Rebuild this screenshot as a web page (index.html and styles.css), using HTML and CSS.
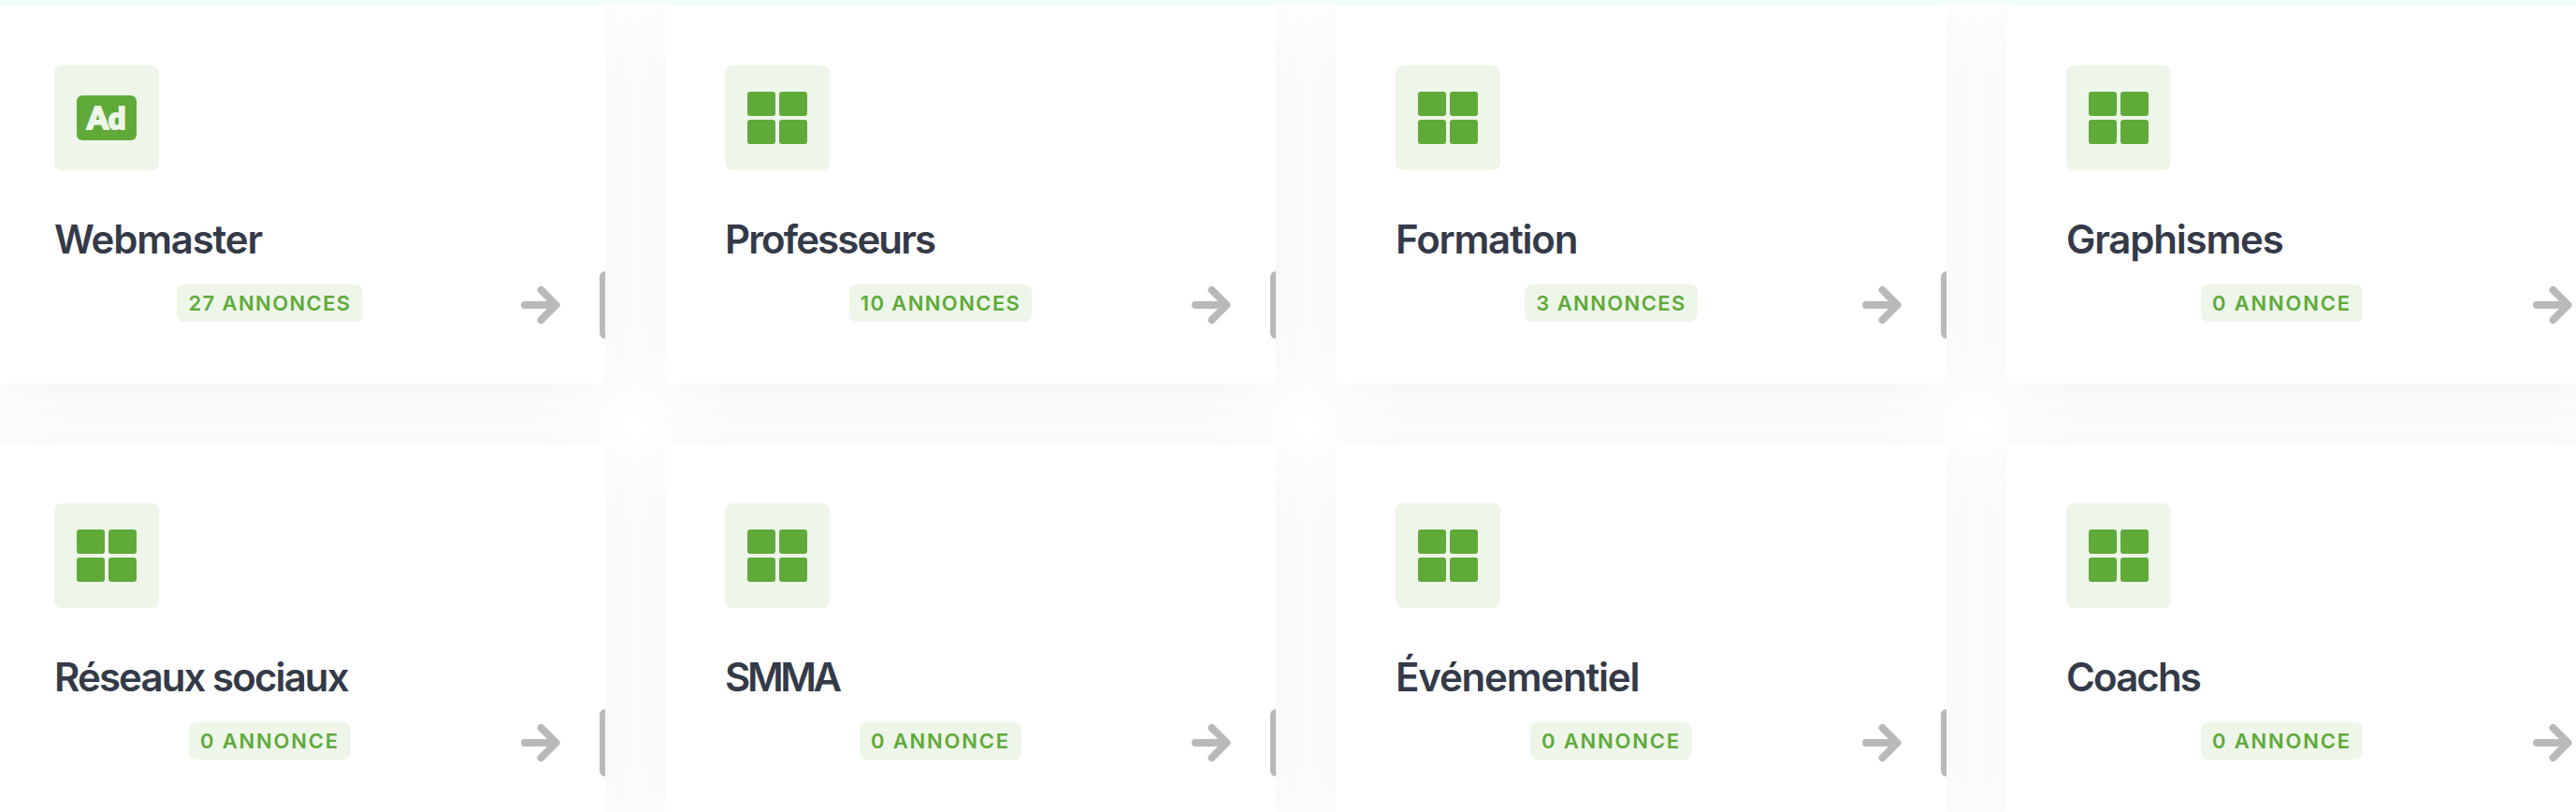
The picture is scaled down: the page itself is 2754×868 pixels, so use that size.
FILE: index.html
```
<!DOCTYPE html>
<html lang="fr">
<head>
<meta charset="utf-8">
<title>Annonces</title>
<link rel="stylesheet" href="styles.css">
<script src="cards.js" defer></script>
</head>
<body>
<svg class="sprite" width="0" height="0">
  <symbol id="arrow" viewBox="0 0 42 40">
    <path d="M4 20H36M21.5 4L37.5 20L21.5 36" fill="none" stroke="currentColor" stroke-width="8" stroke-linecap="round" stroke-linejoin="round"/>
  </symbol>
  <symbol id="grid" viewBox="0 0 64 56">
    <rect width="30" height="26" rx="3"/>
    <rect x="34" width="30" height="26" rx="3"/>
    <rect y="30" width="30" height="26" rx="3"/>
    <rect x="34" y="30" width="30" height="26" rx="3"/>
  </symbol>
</svg>
<div class="topbar"></div>
<div class="categories" id="categories"></div>
</body>
</html>
```
FILE: styles.css
```
* {
  box-sizing: border-box;
}
body {
  margin: 0;
  height: 868px;
  overflow: hidden;
  background: #fff;
  color: #343a48;
  font-family: Inter, "Liberation Sans", sans-serif;
}
.sprite {
  display: block;
}
.topbar {
  position: relative;
  z-index: 2;
  height: 6px;
  background: #f2fdf5;
}
.categories {
  display: grid;
  grid-template-columns: repeat(4, 653px);
  gap: 64px;
  margin-left: -6px;
}
/* the shadow sits on the outer box so it stays under the other cards */
.category {
  border-radius: 8px;
  box-shadow: 0 12px 70px rgba(20, 50, 100, .062);
}
.card {
  position: relative;
  z-index: 1;
  height: 404px;
  padding: 64px;
  overflow: hidden;
  background: #fff;
  border-radius: 8px;
}
.card-icon {
  display: flex;
  align-items: center;
  justify-content: center;
  width: 112px;
  height: 112px;
  border-radius: 8px;
  background: #eef6ea;
  color: #60aa3a;
}
.card-icon svg {
  width: 64px;
  height: 56px;
  fill: currentColor;
}
.ad {
  width: 64px;
  height: 48px;
  border-radius: 6px;
  background: #60aa3a;
  color: #eef6ea;
  font-family: Lato, Inter, sans-serif;
  font-size: 32px;
  font-weight: 900;
  line-height: 48px;
  text-align: center;
  letter-spacing: .5px;
  -webkit-text-stroke: 2.2px #eef6ea;
}
.card-title {
  margin: 46px 0 0;
  font-size: 42px;
  font-weight: 600;
  line-height: 56px;
  letter-spacing: -1.2px;
  white-space: nowrap;
}
.card-title.tight {
  letter-spacing: -1.9px;
}
.card-title.tighter {
  letter-spacing: -3.4px;
}
.card-footer {
  display: flex;
  align-items: center;
  height: 72px;
  margin-top: 6px;
}
.card-count {
  flex: 0 0 461px;
  display: flex;
  justify-content: center;
  height: 72px;
  padding-bottom: 4px;
  align-items: center;
}
.badge {
  height: 40px;
  padding: 0 12px;
  border-radius: 8px;
  background: #eef6ea;
  color: #60aa3a;
  font-size: 22px;
  font-weight: 600;
  line-height: 40px;
  letter-spacing: 1.8px;
  white-space: nowrap;
}
.badge.plural {
  letter-spacing: 1.4px;
}
.arrow {
  flex: none;
  width: 42px;
  height: 40px;
  margin-left: 38px;
  color: #b9b9b9;
}
.handle {
  flex: none;
  width: 72px;
  height: 72px;
  margin-left: 42px;
  border-radius: 6px;
  background: #b9b9b9;
}
```
FILE: cards.js
```
const categories = [
  { name: 'Webmaster', count: 27, icon: 'ad' },
  { name: 'Professeurs', count: 10, fit: 'tight' },
  { name: 'Formation', count: 3 },
  { name: 'Graphismes', count: 0 },
  { name: 'Réseaux sociaux', count: 0, fit: 'tight' },
  { name: 'SMMA', count: 0, fit: 'tighter' },
  { name: 'Événementiel', count: 0 },
  { name: 'Coachs', count: 0, fit: 'tight' }
];

document.getElementById('categories').innerHTML = categories.map(c => `
<div class="category">
  <div class="card">
    <div class="card-icon">${c.icon == 'ad' ? '<span class="ad">Ad</span>' : '<svg><use href="#grid"/></svg>'}</div>
    <h3 class="card-title ${c.fit || ''}">${c.name}</h3>
    <div class="card-footer">
      <div class="card-count"><span class="badge ${c.count > 1 ? 'plural' : ''}">${c.count} ${c.count > 1 ? 'ANNONCES' : 'ANNONCE'}</span></div>
      <svg class="arrow"><use href="#arrow"/></svg>
      <span class="handle"></span>
    </div>
  </div>
</div>`).join('');
```
